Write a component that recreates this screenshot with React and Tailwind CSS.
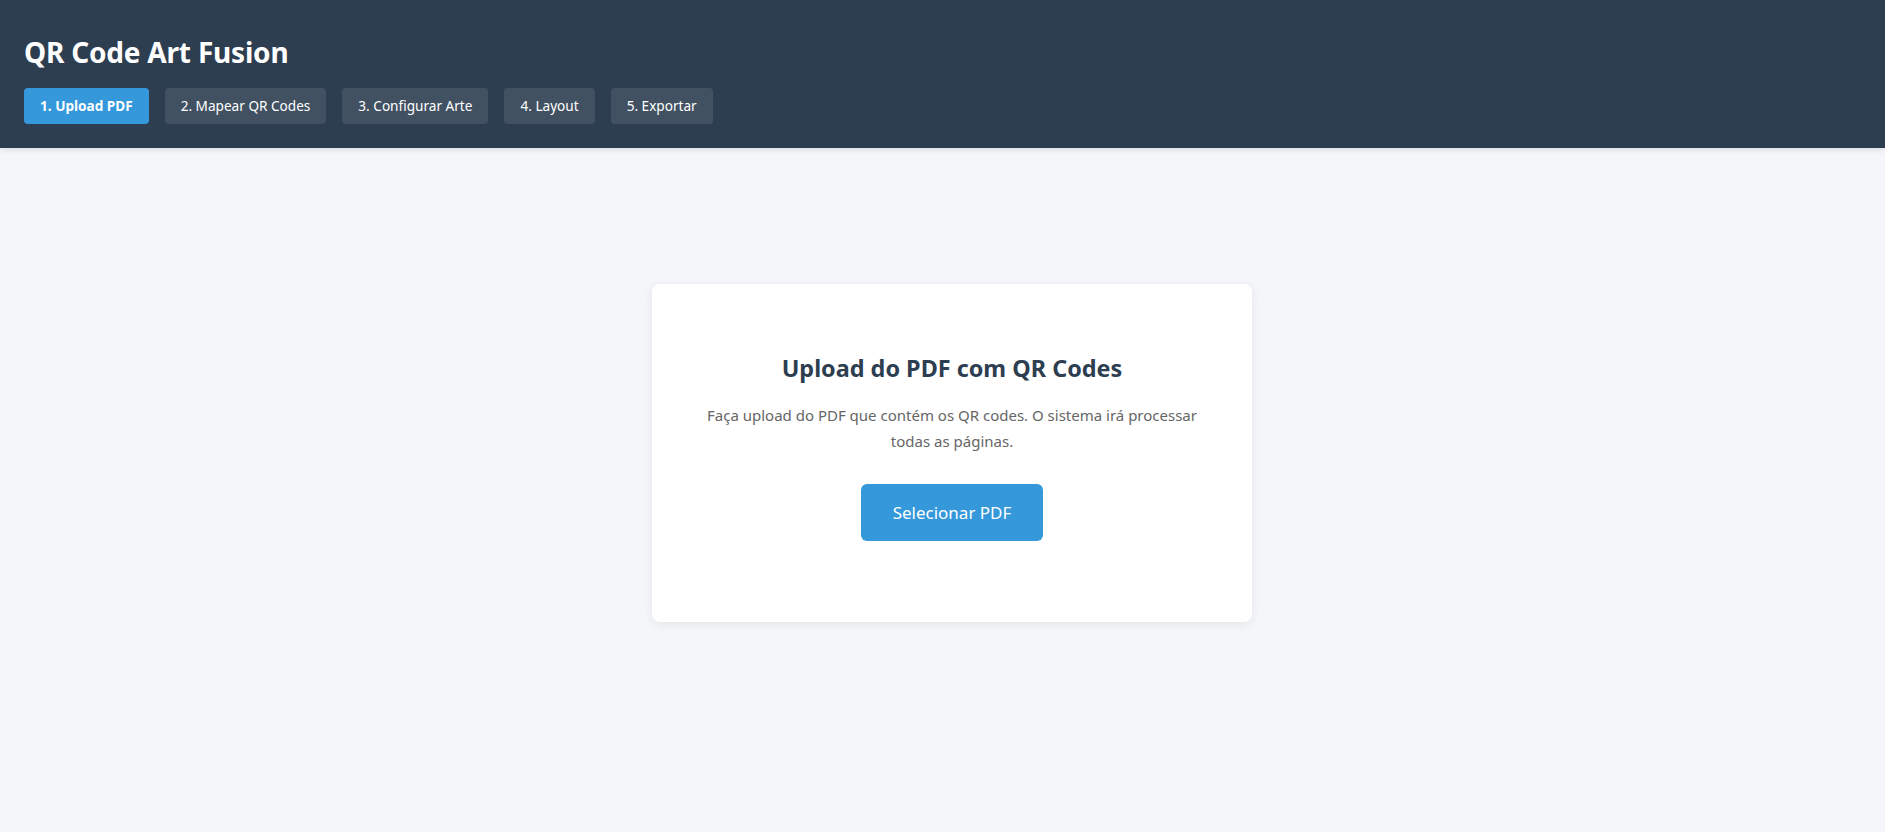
import React, { useState } from 'react';

const steps = ['1. Upload PDF', '2. Mapear QR Codes', '3. Configurar Arte', '4. Layout', '5. Exportar'];

export default function App() {
  const [step, setStep] = useState(0);

  return (
    <div className="min-h-screen bg-[#f5f6fa] font-['Noto_Sans',sans-serif] antialiased">
      {/* Cabeçalho */}
      <header className="bg-[#2c3e50] text-white px-6 pt-[34px] pb-6 shadow-[0_2px_6px_rgba(0,0,0,0.1)]">
        <h1 className="text-[28px] leading-[36px] font-bold tracking-[-0.2px] mb-[18px]">QR Code Art Fusion</h1>
        <nav className="flex gap-4">
          {steps.map((label, i) => (
            <button
              key={label}
              onClick={() => setStep(i)}
              className={
                i === step
                  ? 'h-[36px] px-4 rounded text-[13.6px] font-bold bg-[#3498db] text-white'
                  : 'h-[36px] px-4 rounded text-[13.6px] bg-white/10 text-white'
              }
            >
              {label}
            </button>
          ))}
        </nav>
      </header>

      {/* Conteúdo */}
      <main className="flex justify-center pt-[136px] pl-[19px]">
        <section className="w-[600px] bg-white rounded-lg shadow-[0_2px_10px_rgba(0,0,0,0.08)] px-12 pt-[68px] pb-[81px] text-center">
          <h2 className="text-[23.4px] leading-[32px] font-bold text-[#2c3e50] mb-[18px]">Upload do PDF com QR Codes</h2>
          <p className="text-[15px] leading-[26px] text-[#666] mb-[30px]">
            Faça upload do PDF que contém os QR codes. O sistema irá processar todas as páginas.
          </p>
          <button className="bg-[#3498db] text-white text-[17px] leading-[25px] px-8 py-4 rounded-md">
            Selecionar PDF
          </button>
        </section>
      </main>
    </div>
  );
}
